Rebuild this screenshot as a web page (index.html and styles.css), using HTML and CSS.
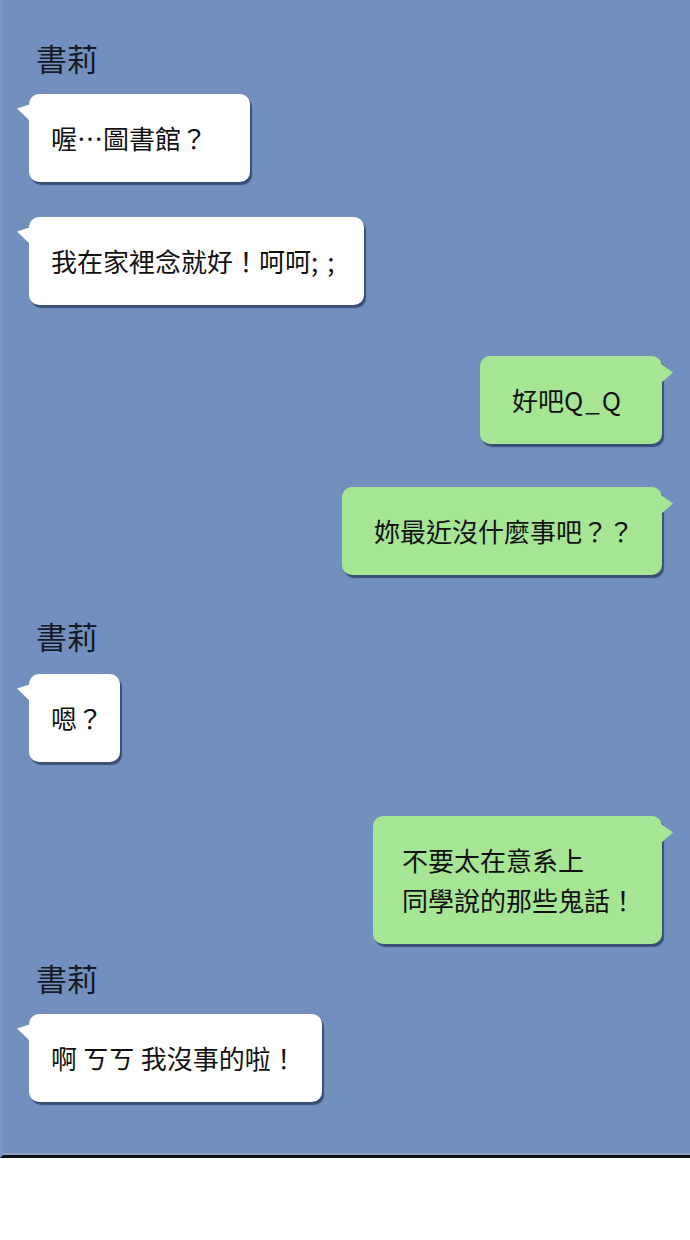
FILE: index.html
```html
<!DOCTYPE html>
<html lang="zh-Hant">
<head>
  <meta charset="UTF-8">
  <meta name="viewport" content="width=device-width, initial-scale=1.0">
  <title>書莉</title>
  <link rel="stylesheet" href="styles.css">
</head>
<body>
  <div class="chat">
    <!-- 書莉 -->
    <div class="name first">書莉</div>
    <div class="bubble left w-221 after-name">喔…圖書館？</div>
    <div class="bubble left w-335 gap-35">我在家裡念就好！呵呵<span class="wide">;;</span></div>

    <!-- me -->
    <div class="bubble right w-182 gap-51">好吧<span class="latin">Q_Q</span></div>
    <div class="bubble right w-320 gap-43">妳最近沒什麼事吧？？</div>

    <div class="name gap-41">書莉</div>
    <div class="bubble left w-91 gap-18">嗯？</div>

    <div class="bubble right w-289 narrow gap-54">不要太在意系上<br>同學說的那些鬼話！</div>

    <div class="name gap-14">書莉</div>
    <div class="bubble left w-293 after-name">啊 ㄎㄎ 我沒事的啦！</div>
  </div>
</body>
</html>
```

FILE: styles.css
```css
body {
  margin: 0;
  background: #fff;
  font-family: "Noto Sans CJK TC", "Noto Sans", sans-serif;
  color: #111;
}

.chat {
  display: flex;
  flex-direction: column;
  background: #7290be;
  border-left: 3px solid #7a97c4;
  padding: 38px 0 53px 0;
  border-bottom: 3px solid #0b0f16;
  box-shadow: inset 0 -2px 0 #8d9ebd;
}

.name {
  margin-left: 33px;
  height: 40px;
  line-height: 40px;
  font-size: 31px;
  color: #161a26;
}

.bubble {
  position: relative;
  box-sizing: border-box;
  padding: 24px 0 24px 22px;
  font-size: 26px;
  line-height: 40px;
  border-radius: 10px;
  box-shadow: 2px 3px 1px rgba(38, 58, 96, 0.75);
  white-space: nowrap;
}

.bubble .wide {
  letter-spacing: 9px;
}

.bubble .latin {
  letter-spacing: 2px;
}

.bubble::before {
  content: '';
  position: absolute;
  width: 14px;
  height: 18px;
}

.left {
  align-self: flex-start;
  margin-left: 26px;
  background: #fff;
}

.left::before {
  left: -12px;
  top: 10px;
  background: #fff;
  clip-path: polygon(0 25%, 100% 0, 100% 100%);
}

.right {
  align-self: flex-end;
  margin-right: 28px;
  padding-left: 32px;
  background: #a5e593;
}

.right.narrow {
  padding-left: 29px;
}

.right::before {
  right: -11px;
  top: 8px;
  width: 12px;
  height: 19px;
  background: #a5e593;
  clip-path: polygon(0 0, 100% 45%, 0 100%);
}

.w-91 { width: 91px; }
.w-182 { width: 182px; }
.w-221 { width: 221px; }
.w-289 { width: 289px; }
.w-293 { width: 293px; }
.w-320 { width: 320px; }
.w-335 { width: 335px; }

.after-name { margin-top: 16px; }
.gap-14 { margin-top: 14px; }
.gap-18 { margin-top: 18px; }
.gap-35 { margin-top: 35px; }
.gap-41 { margin-top: 41px; }
.gap-43 { margin-top: 43px; }
.gap-51 { margin-top: 51px; }
.gap-54 { margin-top: 54px; }
```
